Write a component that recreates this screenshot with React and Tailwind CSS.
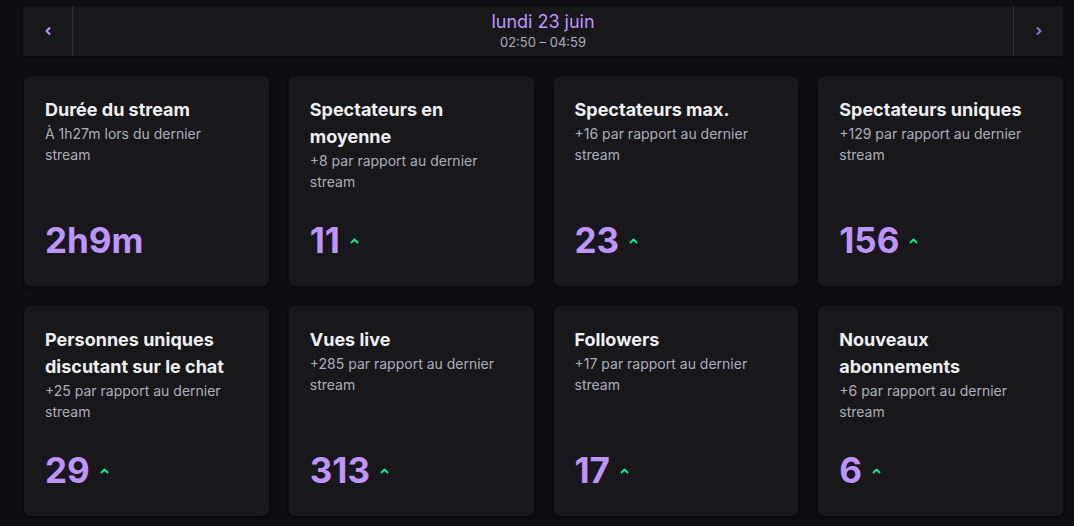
import React from 'react';

const stats = [
  { title: 'Durée du stream', sub: 'À 1h27m lors du dernier stream', value: '2h9m', up: false },
  { title: 'Spectateurs en moyenne', sub: '+8 par rapport au dernier stream', value: '11', up: true },
  { title: 'Spectateurs max.', sub: '+16 par rapport au dernier stream', value: '23', up: true },
  { title: 'Spectateurs uniques', sub: '+129 par rapport au dernier stream', value: '156', up: true },
  { title: 'Personnes uniques discutant sur le chat', sub: '+25 par rapport au dernier stream', value: '29', up: true },
  { title: 'Vues live', sub: '+285 par rapport au dernier stream', value: '313', up: true },
  { title: 'Followers', sub: '+17 par rapport au dernier stream', value: '17', up: true },
  { title: 'Nouveaux abonnements', sub: '+6 par rapport au dernier stream', value: '6', up: true },
];

const Chevron = ({ dir, className }) => (
  <svg width="8" height="10" viewBox="0 0 8 10" className={className}>
    <path
      d={dir === 'left' ? 'M5.5 2 L2.5 5 L5.5 8' : 'M2.5 2 L5.5 5 L2.5 8'}
      fill="none"
      stroke="currentColor"
      strokeWidth="2"
      strokeLinecap="round"
      strokeLinejoin="round"
    />
  </svg>
);

const UpArrow = () => (
  <svg width="9" height="6" viewBox="0 0 9 6" className="text-[#00f593]">
    <path d="M1.5 4.5 L4.5 1.5 L7.5 4.5" fill="none" stroke="currentColor" strokeWidth="1.8" strokeLinecap="round" strokeLinejoin="round" />
  </svg>
);

const StatCard = ({ stat }) => (
  <div className="flex h-[210px] flex-col rounded-md bg-[#18181b] pl-[21px] pr-5 pt-5 pb-6 shadow-[0_1px_3px_rgba(0,0,0,0.6)]">
    <h3 className="text-[18px] leading-[27px] font-bold text-[#efeff1]">{stat.title}</h3>
    <p className="text-[14px] leading-[21px] text-[#adadb8]">{stat.sub}</p>
    <div className="mt-auto flex items-center gap-[10px]">
      <span className="text-[35px] leading-[44px] font-bold text-[#bf94ff]">{stat.value}</span>
      {stat.up && <span className="mt-[1px]"><UpArrow /></span>}
    </div>
  </div>
);

const App = () => {
  return (
    <div className="min-h-[526px] bg-[#0e0e10] pr-[11px] pl-[23px] pt-[6px] font-['Inter','Noto_Sans',sans-serif]">
      {/* Date navigation */}
      <div className="flex h-[50px] items-stretch bg-[#18181b] shadow-[0_1px_2px_rgba(0,0,0,0.6)]">
        <button className="flex w-[50px] items-center justify-center border-r border-[#2f2f35] text-[#bf94ff]">
          <Chevron dir="left" />
        </button>
        <div className="flex flex-1 flex-col items-center justify-center">
          <span className="text-[18px] leading-[22px] text-[#bf94ff]">lundi 23 juin</span>
          <span className="text-[13px] leading-[18px] text-[#adadb8]">02:50 – 04:59</span>
        </div>
        <button className="flex w-[50px] items-center justify-center border-l border-[#2f2f35] text-[#8f75c0]">
          <Chevron dir="right" />
        </button>
      </div>

      {/* Stats grid */}
      <div className="mt-[20px] grid grid-cols-4 gap-x-[20px] gap-y-[20px] pl-[1px]">
        {stats.map((s) => (
          <StatCard key={s.title} stat={s} />
        ))}
      </div>
    </div>
  );
};

export default App;
